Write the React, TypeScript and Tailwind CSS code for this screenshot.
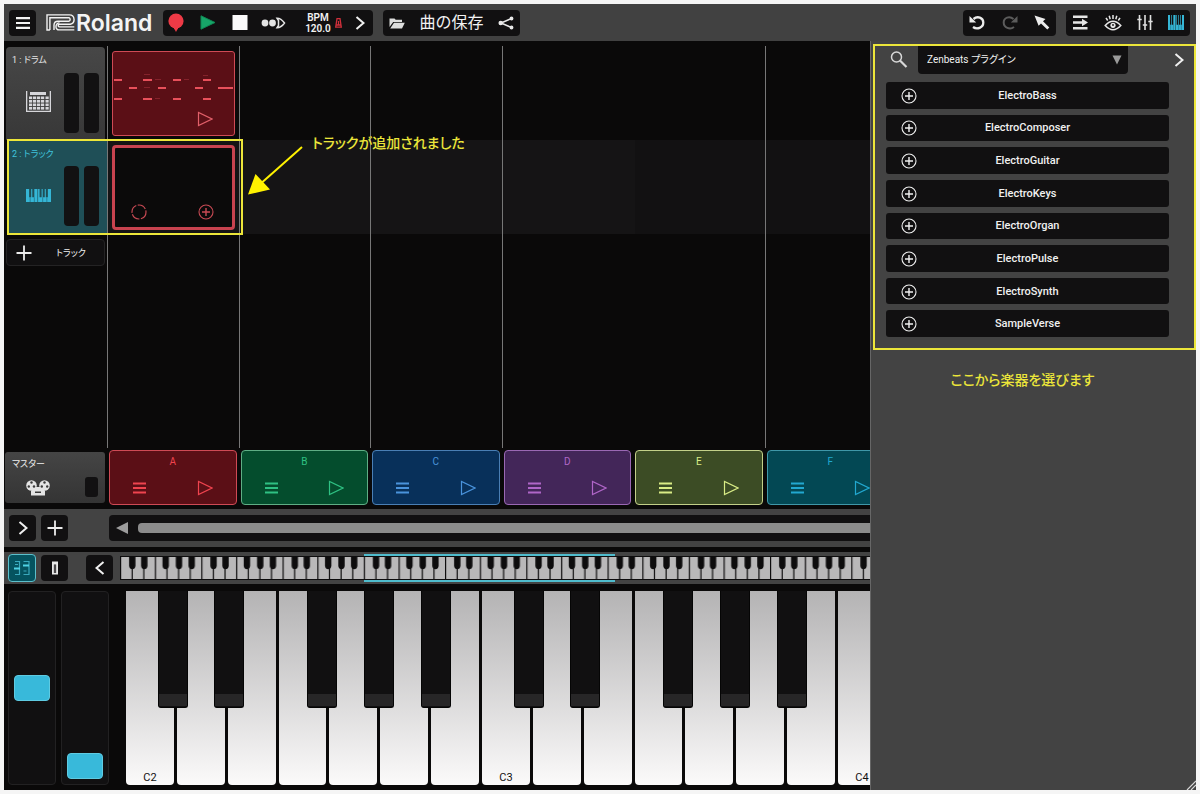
import React from "react";

const PLUGINS = [
  "ElectroBass",
  "ElectroComposer",
  "ElectroGuitar",
  "ElectroKeys",
  "ElectroOrgan",
  "ElectroPulse",
  "ElectroSynth",
  "SampleVerse",
];

const SCENES = [
  { name: "A", box: "border-[#cf4a55] bg-[#5b0f16] text-[#f0444f]" },
  { name: "B", box: "border-[#5fae85] bg-[#044d2d] text-[#2fc183]" },
  { name: "C", box: "border-[#4a7fb5] bg-[#08305a] text-[#4a93dc]" },
  { name: "D", box: "border-[#9a68b4] bg-[#432659] text-[#b066c8]" },
  { name: "E", box: "border-[#c3d089] bg-[#3c4c25] text-[#d9ec86]" },
  { name: "F", box: "border-[#3f97a8] bg-[#034854] text-[#22a8d0]" },
];

const CLIP_NOTES = [
  [2, 28, 8], [31, 28, 9], [61, 28, 8], [91, 28, 8],
  [17, 36, 8], [46, 36, 8], [83, 36, 8], [106, 36, 15],
  [2, 47, 8], [31, 47, 9], [61, 47, 8], [91, 47, 8],
];

const FAINT_NOTES = [
  [31, 23, 6], [42, 28, 6], [71, 28, 5], [31, 36, 6], [42, 47, 5], [90, 24, 5],
];

const BLACK_KEYS = [
  "left-[32px]",
  "left-[88px]",
  "left-[181px]",
  "left-[238px]",
  "left-[295px]",
];

function Chevron({ left = false }: { left?: boolean }) {
  return (
    <svg width="10" height="14" viewBox="0 0 10 14" fill="none" stroke="#f0f0f0" strokeWidth="2">
      <path d={left ? "M8.5 1 1.5 7l7 6" : "M1.5 1l7 6-7 6"} />
    </svg>
  );
}

function Plus() {
  return (
    <svg width="16" height="16" viewBox="0 0 16 16" stroke="#ececec" strokeWidth="1.8">
      <path d="M8 .5v15M.5 8h15" />
    </svg>
  );
}

function CirclePlus() {
  return (
    <svg width="16" height="16" viewBox="0 0 16 16" fill="none" stroke="currentColor" strokeWidth="1.1">
      <circle cx="8" cy="8" r="7" />
      <path d="M8 4v8M4 8h8" strokeWidth="1.4" />
    </svg>
  );
}

function PlayOutline() {
  return (
    <svg width="16" height="16" viewBox="0 0 16 16" fill="none" stroke="currentColor" strokeWidth="1.2">
      <path d="M1.5 1.5v13L15 8z" />
    </svg>
  );
}

function Bars() {
  return (
    <svg width="13" height="12" viewBox="0 0 13 12" stroke="currentColor" strokeWidth="2">
      <path d="M0 1.5h13M0 6h13M0 10.5h13" />
    </svg>
  );
}

function KeysIcon({ width, height }: { width: number; height: number }) {
  return (
    <svg width={width} height={height} viewBox="0 0 24 14" preserveAspectRatio="none">
      <path
        fill="#35b6d6"
        d="M0 0h3v9h2V0h1v9h2V0h3v14H0zM11.6 0h1.4v9h2V0h1v9h2V0h1v9h2V0h3v14H11.6z"
      />
      <path stroke="#174f5c" strokeWidth=".5" d="M4 9v5M8 9v5M16 9v5M20 9v5" />
    </svg>
  );
}

function RolandMark() {
  return (
    <svg width="29" height="17" viewBox="0 0 29 17" fill="none" stroke="#f2f2f2" strokeWidth="1.4">
      <path d="M3.9 16V3.7H23a1.900 1.900 0 0 1 0 3.500H12a4 4 0 0 0-4 3.800V16" />
      <path d="M3.900 16H1V.9h22.500a4.700 4.700 0 0 1 .8 9.300H13.500a1.300 1.300 0 0 0 0 2.700h14.800" />
      <path d="M28.300 15.900H13a3 3 0 0 1-3-3.200 3.600 3.600 0 0 1 3.500-3.800" />
    </svg>
  );
}

function MiniKeyboard() {
  return (
    <svg width="900" height="28" viewBox="0 0 900 28" className="block flex-none" aria-hidden="true">
      <defs>
        <pattern id="octave" width="81.25" height="28" patternUnits="userSpaceOnUse" x="1">
          {[0, 1, 2, 3, 4, 5, 6].map((i) => (
            <rect key={i} x={i * 11.607 + 0.2} y="3" width="10.4" height="22" fill="#b9b8b9" />
          ))}
          {[11.3, 23.3, 44.7, 58, 70.7].map((x) => (
            <path key={x} d={`M${x - 3.2} 2h6.4v10q-.6 3.2-3.2 3.2t-3.2-3.2z`} fill="#0d0c0d" />
          ))}
        </pattern>
      </defs>
      <rect y="2" width="900" height="24" fill="#0d0c0d" />
      <rect width="900" height="28" fill="url(#octave)" />
      <path d="M244 1h251M244 27h251" stroke="#4fbccd" strokeWidth="2" />
    </svg>
  );
}

function Meters() {
  return (
    <div className="absolute top-[26px] right-[6px] flex gap-[5px]">
      <div className="h-[60px] w-[15px] rounded bg-[#121112]" />
      <div className="h-[60px] w-[15px] rounded bg-[#121112]" />
    </div>
  );
}

const group = "flex h-[26px] items-center rounded bg-[#111011]";
const square = "flex h-[26px] w-[27px] flex-none items-center justify-center rounded bg-[#111011]";
const palt = "[font-feature-settings:'palt']";
const label = "text-[9px] leading-[14px] " + palt;

function Toolbar() {
  return (
    <header className="flex h-[37px] flex-none items-center bg-[#414141] pr-[6px] pl-[5px]">
      <button aria-label="Menu" className={square}>
        <svg width="14" height="12" viewBox="0 0 14 12" stroke="#f4f4f4" strokeWidth="2.2">
          <path d="M0 1.2h14M0 6h14M0 10.8h14" />
        </svg>
      </button>
      <div className="ml-[10px] flex w-[117px] items-center gap-px">
        <RolandMark />
        <span className="font-[Inter,sans-serif] text-[23px] leading-6 font-semibold text-[#f4f4f4]">Roland</span>
      </div>
      <div className={group + " w-[210px] pr-[8px] pl-[5px]"}>
        <div className="flex items-center gap-4">
          <button aria-label="Record">
            <svg width="16" height="19" viewBox="0 0 16 19" fill="#ee3a46">
              <circle cx="8" cy="8" r="7.6" />
              <path d="M6 14.5h4v1.8h-.6L8 19l-1.400-2.700H6z" />
            </svg>
          </button>
          <button aria-label="Play">
            <svg width="16" height="15" viewBox="0 0 16 15">
              <path d="M1 .8v13.400L15 7.500z" fill="#17a568" stroke="#0f8a55" />
            </svg>
          </button>
          <button aria-label="Stop">
            <svg width="16" height="15" viewBox="0 0 16 15">
              <path d="M.5 0h15v15H.5z" fill="#fafafa" />
            </svg>
          </button>
        </div>
        <div className="ml-[13px] flex flex-1 items-center justify-between">
          <button aria-label="Song mode">
            <svg width="25" height="12" viewBox="0 0 25 12" fill="#e4e4e4">
              <circle cx="4" cy="6" r="3.400" />
              <circle cx="11.500" cy="6" r="3.400" />
              <path d="M16 1.200c3 0 5.500 2 7.500 4.800-2 2.800-4.500 4.800-7.500 4.800l1.500-2.300V3.500z" fill="none" stroke="#e4e4e4" strokeWidth="1.500" />
            </svg>
          </button>
          <button className="flex items-center gap-[4px] pl-[6px]">
            <span className="flex flex-col text-center text-[10px] leading-[11px] font-semibold text-[#f2f2f2]">
              <span>BPM</span>
              <span>120.0</span>
            </span>
            <svg width="7" height="10" viewBox="0 0 7 10" fill="none" stroke="#d0303b" strokeWidth="1.300">
              <path d="M2 .7h3l1.300 8.500H.7zM3.500 3v4M1 7h5" />
            </svg>
          </button>
          <button aria-label="More transport controls"><Chevron /></button>
        </div>
      </div>
      <div className={group + " ml-[10px] w-[137px] justify-between px-[6px]"}>
        <button aria-label="Open">
          <svg width="16" height="12" viewBox="0 0 16 12" fill="#dedede">
            <path d="M.5 10V1.500h5l1.200 1.300H13V5H4.200zM5 5.800h10.800L13 11.500H1.200z" />
          </svg>
        </button>
        <button className="text-[16px] leading-[22px] text-[#f2f2f2]">曲の保存</button>
        <button aria-label="Share">
          <svg width="16" height="14" viewBox="0 0 16 14" fill="#e8e8e8" stroke="#e8e8e8" strokeWidth="1.500">
            <path d="M13.500 2.500 3 7l10.500 4.500" fill="none" />
            <circle cx="2.700" cy="7" r="1.500" />
            <circle cx="13.500" cy="2.500" r="1.200" />
            <circle cx="13.500" cy="11.500" r="1.200" />
          </svg>
        </button>
      </div>
      <div className={group + " ml-auto w-[93px] justify-between px-[6px]"}>
        <button aria-label="Undo">
          <svg width="16" height="15" viewBox="0 0 16 15" fill="none" stroke="#ececec" strokeWidth="2.300">
            <path d="M4.500 4C8.500.6 14.300 2.500 14.300 7.500c0 5.200-6.300 7.500-10.300 4.500" />
            <path d="M.5 1v6.400h6.700z" fill="#ececec" stroke="none" />
          </svg>
        </button>
        <button aria-label="Redo">
          <svg width="16" height="15" viewBox="0 0 16 15" fill="none" stroke="#5c5c5c" strokeWidth="2">
            <path d="M11.500 4C7.500.6 1.700 2.500 1.700 7.500c0 5.200 6.300 7.500 10.300 4.500" />
            <path d="M15.500 1v6.400H8.800z" fill="#5c5c5c" stroke="none" />
          </svg>
        </button>
        <button aria-label="Select tool">
          <svg width="16" height="15" viewBox="0 0 16 15" fill="#ececec">
            <path d="M.5.5 11.500 4 9 6.200l6.300 6.400-2 2L7 8.400 4.600 10.800z" />
          </svg>
        </button>
      </div>
      <div className={group + " ml-[10px] w-[124px] justify-between px-[6px]"}>
        <button aria-label="Track lanes">
          <svg width="17" height="15" viewBox="0 0 17 15" stroke="#e6e6e6" strokeWidth="2.400" fill="#e6e6e6">
            <path d="M1 1.700h14.500M1 7.500h10M1 13.300h14.500" />
            <path d="M10 3.800v7.400l6-3.700z" stroke="none" />
          </svg>
        </button>
        <button aria-label="View">
          <svg width="18" height="16" viewBox="0 0 18 16" fill="none" stroke="#e6e6e6" strokeWidth="1.500">
            <path d="M1.200 10.500q7.800-8.500 15.600 0-7.800 8.500-15.600 0z" />
            <circle cx="9" cy="10.300" r="2.600" fill="#e6e6e6" stroke="none" />
            <circle cx="9" cy="10" r=".9" fill="#111011" stroke="none" />
            <path d="M9 0v4M5.200.8l1 3.500M12.800.8l-1 3.500M2 2.800l1.700 2.700M16 2.800l-1.700 2.700" />
          </svg>
        </button>
        <button aria-label="Mixer">
          <svg width="16" height="15" viewBox="0 0 16 15" stroke="#e0e0e0" strokeWidth="1.600">
            <path d="M2.500 0v15M8 0v15M13.500 0v15M.3 4.500h4.400M5.800 10h4.400M11.300 6.500h4.400" />
          </svg>
        </button>
        <button aria-label="Keyboard"><KeysIcon width={16} height={15} /></button>
      </div>
    </header>
  );
}

function Session() {
  return (
    <div className="relative flex min-h-[407px] flex-1 pt-[5px]">
      <div className="absolute top-[99px] right-0 left-[103px] flex h-[94px] bg-[#151415]">
        <div className="ml-auto w-[235px] bg-[#121112]" />
      </div>

      <div className="relative flex w-[103px] flex-none flex-col">
        <div className="relative mt-px mr-[2px] ml-[2px] h-[93px] rounded-t bg-linear-to-b from-[#474747] to-[#383838]">
          <p className={"pt-[6px] pl-[6px] text-[#e6e6e6] " + label}>1 : ドラム</p>
          <svg className="absolute top-[44px] left-[20px]" width="25" height="21" viewBox="0 0 25 21" fill="#d6d6da">
            <path d="M0 0h1.300v19.700h22.400V0H25v21H0z" />
            <path d="M4 1h16v3H4z" />
            {[5.500, 9, 12.500, 16].map((y) =>
              [3, 7, 11, 15, 19.500].map((x) => <rect key={`${x}-${y}`} x={x} y={y} width="3.200" height="2.600" />)
            )}
          </svg>
          <Meters />
        </div>
        <div className="relative ml-[3px] h-[94px] bg-[#1f4f57]">
          <p className={"pt-[7px] pl-[5px] text-[#3fc3dc] " + label}>2 : トラック</p>
          <div className="absolute top-[49px] left-[19px]"><KeysIcon width={25} height={13} /></div>
          <div className="absolute inset-y-0 right-[2px] left-0"><Meters /></div>
        </div>
        <button className="mt-[5px] mr-[2px] ml-[2px] flex h-[27px] items-center gap-[24px] rounded-sm border border-[#242324] bg-[#111011] pl-[9px]">
          <Plus />
          <span className={"text-[#f0f0f0] " + label}>トラック</span>
        </button>
      </div>

      <div className="relative min-w-0 flex-1 overflow-hidden">
        <div className="grid h-full w-[789px] grid-cols-6">
          <div className="flex flex-col gap-[9px] border-l border-[#777] pt-[5px] pr-[4px] pl-[4px]">
            <button aria-label="Drum clip" className="relative h-[85px] rounded-[3px] border border-[#cf4a55] bg-[#5b0f16] text-[#e2606a]">
              <svg className="absolute inset-0" width="122" height="83" viewBox="0 0 122 83">
                {CLIP_NOTES.map(([x, y, w]) => (
                  <rect key={`${x}-${y}`} x={x - 1} y={y - 1} width={w} height="2" fill="#e8505b" />
                ))}
                {FAINT_NOTES.map(([x, y, w]) => (
                  <rect key={`${x}-${y}`} x={x} y={y - 1} width={w} height="1" fill="#84222b" />
                ))}
              </svg>
              <span className="absolute right-[21px] bottom-[8px]"><PlayOutline /></span>
            </button>
            <div className="relative h-[85px] rounded border-[3px] border-[#c8434f] bg-[#0b0a0a] text-[#c84a54]">
              <button aria-label="Record clip" className="absolute bottom-[7px] left-[16px]">
                <svg width="16" height="16" viewBox="0 0 16 16" fill="none" stroke="currentColor" strokeWidth="1.200">
                  <circle cx="8" cy="8" r="7" strokeDasharray="9 1.500" />
                </svg>
              </button>
              <button aria-label="Add clip" className="absolute right-[18px] bottom-[7px]"><CirclePlus /></button>
            </div>
          </div>
          <div className="border-l border-[#777]" />
          <div className="border-l border-[#777]" />
          <div className="border-l border-[#777]" />
          <div />
          <div className="border-l border-[#777]" />
        </div>
      </div>

      <div className="pointer-events-none absolute top-[98px] left-[3px] h-[96px] w-[236px] border-2 border-[#ece63a]" />
      <svg className="pointer-events-none absolute top-[102px] left-[242px]" width="60" height="54" viewBox="0 0 60 54" fill="#fff200">
        <path d="M56 4 12 43" stroke="#fff200" strokeWidth="2" />
        <path d="M2 51.500 9.500 31 24 46.500z" />
      </svg>
      <p className={"pointer-events-none absolute top-[92px] left-[308px] text-[14px] leading-[20px] font-medium text-[#ece63a] " + palt}>
        トラックが追加されました
      </p>
    </div>
  );
}

function SceneRow() {
  return (
    <div className="flex h-[61px] flex-none items-start pt-[2px]">
      <div className="relative mt-[2px] ml-px h-[51px] w-[100px] flex-none rounded-[3px] bg-linear-to-b from-[#454545] to-[#343434]">
        <p className={"pt-[5px] pl-[7px] text-[#f0f0f0] " + label}>マスター</p>
        <svg className="absolute top-[28px] left-[21px]" width="24" height="16" viewBox="0 0 24 16">
          <g fill="#e4e4e4">
            <circle cx="5.500" cy="5.500" r="5.300" />
            <circle cx="18.500" cy="5.500" r="5.300" />
            <path d="M8 7h8l3 4v4.500H5V11z" />
          </g>
          <g fill="#3a3a3a">
            <circle cx="5.500" cy="2.500" r="1.200" /><circle cx="2.800" cy="6.500" r="1.200" /><circle cx="8" cy="6.500" r="1.200" />
            <circle cx="18.500" cy="2.500" r="1.200" /><circle cx="15.800" cy="6.500" r="1.200" /><circle cx="21.200" cy="6.500" r="1.200" />
            <path d="M9 11.500h6v1.500H9z" />
          </g>
        </svg>
        <div className="absolute right-[7px] bottom-[6px] h-[20px] w-[13px] rounded-[3px] bg-[#121112]" />
      </div>
      <div className="ml-[2px] min-w-0 flex-1 overflow-hidden">
        <div className="grid w-[789px] grid-cols-6">
          {SCENES.map((s) => (
            <div key={s.name} className="pr-[2px] pl-[2px]">
              <div className={"relative h-[55px] rounded border " + s.box}>
                <p className="pt-[4px] text-center text-[10px] leading-[14px]">{s.name}</p>
                <button aria-label={`Scene ${s.name} menu`} className="absolute bottom-[10px] left-[23px]"><Bars /></button>
                <button aria-label={`Play scene ${s.name}`} className="absolute right-[23px] bottom-[8px]"><PlayOutline /></button>
              </div>
            </div>
          ))}
        </div>
      </div>
    </div>
  );
}

const fader =
  "h-full w-[36px] appearance-none bg-transparent [direction:rtl] [writing-mode:vertical-lr] [&::-webkit-slider-thumb]:h-[26px] [&::-webkit-slider-thumb]:w-[36px] [&::-webkit-slider-thumb]:appearance-none [&::-webkit-slider-thumb]:rounded [&::-webkit-slider-thumb]:border [&::-webkit-slider-thumb]:border-[#5fcbe2] [&::-webkit-slider-thumb]:bg-[#38b9da]";

function Piano() {
  return (
    <div className="flex h-[206px] flex-none pt-[7px] pb-[5px] pl-[4px]">
      <div className="flex w-[48px] flex-none justify-center rounded border border-[#222122] bg-[#111011] py-[5px]">
        <input aria-label="Pitch bend" type="range" defaultValue={50} className={fader} />
      </div>
      <div className="ml-[5px] flex w-[48px] flex-none justify-center rounded border border-[#222122] bg-[#111011] py-[5px]">
        <input aria-label="Modulation" type="range" defaultValue={0} className={fader} />
      </div>
      <div className="ml-[17px] flex min-w-0 flex-1 overflow-hidden">
        {[2, 3, 4].map((oct) => (
          <div key={oct} className="relative grid h-full w-[356px] flex-none grid-cols-7">
            {["C", "D", "E", "F", "G", "A", "B"].map((n) => (
              <button
                key={n}
                aria-label={n + oct}
                className="mr-[3px] flex items-end justify-center rounded-b bg-linear-to-b from-[#b4b3b4] to-[#fbfafa] font-[Roboto,sans-serif] text-[11px] leading-[14px] text-[#111]"
              >
                {n === "C" ? n + oct : ""}
              </button>
            ))}
            {BLACK_KEYS.map((pos) => (
              <div key={pos} className={"absolute top-0 h-[117px] w-[30px] rounded-b-[3px] border border-t-0 border-[#050505] bg-[#111011] " + pos}>
                <div className="mt-[103px] h-[12px] bg-[#272627]" />
              </div>
            ))}
          </div>
        ))}
      </div>
    </div>
  );
}

function PluginPanel() {
  return (
    <aside className="relative flex w-[326px] flex-none flex-col border-l border-[#666] bg-[#434343]">
      <section className="mt-[3px] ml-[2px] border-2 border-[#ece63a] pb-[11px]">
        <div className="flex h-[27px] items-center pl-[15px]">
          <svg width="18" height="17" viewBox="0 0 18 17" fill="none" stroke="#d8d8d8" strokeWidth="1.500">
            <circle cx="6.500" cy="6" r="5" />
            <path d="M10 9.500 16.500 16" strokeWidth="2.200" />
          </svg>
          <div className="relative ml-[10px] w-[210px]">
            <select
              aria-label="Plugin source"
              className={"h-[28px] w-full appearance-none rounded-b bg-[#111011] pl-[9px] text-[10px] text-[#f0f0f0] " + palt}
            >
              <option>Zenbeats プラグイン</option>
            </select>
            <svg className="pointer-events-none absolute top-[9px] right-[6px]" width="10" height="10" viewBox="0 0 10 10">
              <path d="M.5.5h9L5 9.500z" fill="#9a9a9a" />
            </svg>
          </div>
          <button aria-label="Close panel" className="mr-[10px] ml-auto"><Chevron /></button>
        </div>
        <ul className="mt-[9px] mr-[25px] ml-[11px] grid h-[255px] grid-rows-8 gap-[6px]">
          {PLUGINS.map((p) => (
            <li key={p} className="grid">
              <button className="relative flex items-center justify-center rounded-[3px] bg-[#111011] pt-px text-[11px] leading-[14px] font-medium text-[#f0f0f0]">
                <span className="absolute left-[15px]"><CirclePlus /></span>
                {p}
              </button>
            </li>
          ))}
        </ul>
      </section>
      <p className={"mt-[20px] pr-[22px] text-center text-[14px] leading-[20px] font-medium text-[#ece63a] " + palt}>
        ここから楽器を選びます
      </p>
      <svg className="absolute right-0 bottom-0" width="10" height="10" viewBox="0 0 10 10" stroke="#d8d8d8" strokeWidth="1.200">
        <path d="M1 10 10 1M5 10l5-5" />
      </svg>
    </aside>
  );
}

export default function App() {
  return (
    <div className="flex min-h-screen bg-[#f5f5f5] p-1 font-[Roboto,'Noto_Sans_CJK_JP',sans-serif]">
      <div className="flex min-w-0 flex-1 flex-col bg-[#0a0909]">
        <Toolbar />
        <div className="flex flex-1">
          <main className="flex min-w-0 flex-1 flex-col">
            <Session />
            <SceneRow />
            <div className="flex h-[38px] flex-none items-center bg-[#434343] pl-[5px]">
              <button aria-label="Expand" className={square}><Chevron /></button>
              <button aria-label="Add" className={square + " ml-[5px]"}><Plus /></button>
              <div className="ml-[41px] flex h-[26px] min-w-0 flex-1 items-center gap-[10px] rounded-l bg-[#111011] pl-[7px]">
                <button aria-label="Scroll left">
                  <svg width="12" height="12" viewBox="0 0 12 12"><path d="M0 6 12 0v12z" fill="#9c9c9c" /></svg>
                </button>
                <div className="h-[10px] flex-1 rounded-l bg-[#8c8c8c]" />
              </div>
            </div>
            <div className="mt-[5px] flex h-[32px] flex-none items-center bg-[#434343] pl-[4px]">
              <button aria-label="Performance controls" className="flex h-[28px] w-[28px] flex-none items-center justify-center rounded border border-[#5cc0cc] bg-[#05535f]">
                <svg width="16" height="16" viewBox="0 0 16 16" fill="none" stroke="#3aa9bd" strokeWidth="1.200">
                  <path d="M1 1.500h4.500v13H1M9.500 14.500H15v-13H9.500" />
                  <path d="M0 8.500h6M9 5.500h6" strokeWidth="2" stroke="#4fd2e4" />
                  <path d="M9.500 11h3M1 4.500h3" />
                </svg>
              </button>
              <button aria-label="Key view" className={square + " ml-[5px]"}>
                <svg width="8" height="14" viewBox="0 0 8 14">
                  <path d="M1 .5h6v13H1z" fill="#e8e8e8" />
                  <path d="M2.800 3.500h2.400V12H2.800z" fill="#6a696a" />
                  <path d="M3.500 3.500h1V12h-1z" fill="#2a292a" />
                </svg>
              </button>
              <button aria-label="Scroll keys left" className={square + " ml-[18px]"}><Chevron left /></button>
              <div className="ml-[7px] min-w-0 flex-1 overflow-hidden"><MiniKeyboard /></div>
            </div>
            <Piano />
          </main>
          <PluginPanel />
        </div>
      </div>
    </div>
  );
}
